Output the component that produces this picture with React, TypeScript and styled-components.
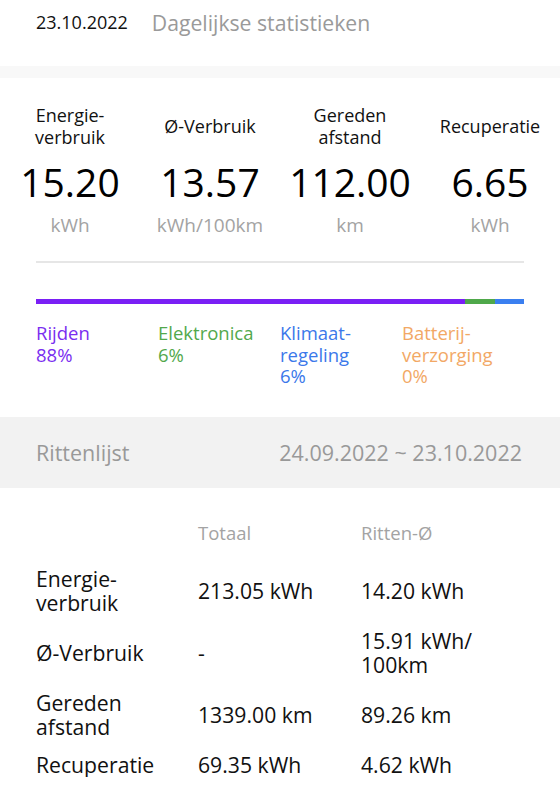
import React from "react";
import styled, { createGlobalStyle } from "styled-components";

const Global = createGlobalStyle`
  html, body { margin: 0; padding: 0; background: #fff; }
  body { font-family: "Open Sans", "Noto Sans", sans-serif; color: #111; }
`;

const Page = styled.div`
  width: 560px;
  display: flex;
  flex-direction: column;
`;

const Header = styled.div`
  height: 44px;
  display: flex;
  align-items: center;
  gap: 24px;
  padding: 0 36px;
  margin-bottom: 22px;
`;

const HeaderDate = styled.span`
  font-size: 18px;
  color: #111;
`;

const HeaderTitle = styled.span`
  font-size: 21.2px;
  color: #9a9a9a;
`;

const Band = styled.div<{ $h: number; $bg: string }>`
  height: ${(p) => p.$h}px;
  background: ${(p) => p.$bg};
`;

const Stats = styled.div`
  display: grid;
  grid-template-columns: repeat(4, 1fr);
  padding-top: 26px;
`;

const Stat = styled.div`
  display: flex;
  flex-direction: column;
  align-items: center;
  text-align: center;
`;

const StatLabel = styled.div`
  height: 44px;
  display: flex;
  align-items: center;
  font-size: 18px;
  line-height: 22px;
`;

const StatValue = styled.div`
  margin-top: 12px;
  font-size: 39px;
  line-height: 44px;
  color: #000;
`;

const StatUnit = styled.div`
  margin-top: 10px;
  font-size: 19px;
  line-height: 22px;
  color: #a3a3a3;
`;

const Inner = styled.div`
  padding: 0 36px;
`;

const Divider = styled.div`
  height: 2px;
  background: #e6e6e6;
  margin-top: 25px;
`;

const Bar = styled.div`
  display: flex;
  height: 5px;
  margin-top: 36px;
`;

const Seg = styled.div<{ $c: string }>`
  background: ${(p) => p.$c};
`;

const Legend = styled.div`
  display: grid;
  grid-template-columns: repeat(4, 1fr);
  margin-top: 18px;
  margin-bottom: 30px;
`;

const LegendItem = styled.div<{ $c: string }>`
  font-size: 18.5px;
  line-height: 21.5px;
  color: ${(p) => p.$c};
`;

const ListBar = styled.div`
  height: 71px;
  background: #f2f2f2;
  display: flex;
  align-items: center;
  justify-content: space-between;
  padding: 0 38px 0 36px;
  font-size: 21.5px;
  color: #999;
`;

const Table = styled.div`
  display: grid;
  grid-template-columns: 162px 163px 1fr;
  padding: 34px 36px 0;
  row-gap: 14px;
  align-items: center;
`;

const HeadCell = styled.div`
  font-size: 18.5px;
  line-height: 22px;
  color: #a3a3a3;
  margin-bottom: 9px;
`;

const Cell = styled.div`
  font-size: 21.2px;
  line-height: 24px;
  color: #111;
`;

const stats = [
  { label: ["Energie-", "verbruik"], value: "15.20", unit: "kWh" },
  { label: ["Ø-Verbruik"], value: "13.57", unit: "kWh/100km" },
  { label: ["Gereden", "afstand"], value: "112.00", unit: "km" },
  { label: ["Recuperatie"], value: "6.65", unit: "kWh" },
];

const segs = [
  { c: "#7a1ff5", p: 88 },
  { c: "#4fa84a", p: 6 },
  { c: "#3a7ff0", p: 6 },
];

const legend = [
  { c: "#7a2ef0", lines: ["Rijden", "88%"] },
  { c: "#52a84c", lines: ["Elektronica", "6%"] },
  { c: "#3b78ea", lines: ["Klimaat-", "regeling", "6%"] },
  { c: "#f2a865", lines: ["Batterij-", "verzorging", "0%"] },
];

const rows = [
  { label: ["Energie-", "verbruik"], total: ["213.05 kWh"], avg: ["14.20 kWh"] },
  { label: ["Ø-Verbruik"], total: ["-"], avg: ["15.91 kWh/", "100km"] },
  { label: ["Gereden", "afstand"], total: ["1339.00 km"], avg: ["89.26 km"] },
  { label: ["Recuperatie"], total: ["69.35 kWh"], avg: ["4.62 kWh"] },
];

const Lines = ({ lines }: { lines: string[] }) => (
  <>
    {lines.map((l, i) => (
      <React.Fragment key={i}>
        {i > 0 && <br />}
        {l}
      </React.Fragment>
    ))}
  </>
);

export default function App() {
  return (
    <Page>
      <Global />
      <Header>
        <HeaderDate>23.10.2022</HeaderDate>
        <HeaderTitle>Dagelijkse statistieken</HeaderTitle>
      </Header>
      <Band $h={12} $bg="#f8f8f8" />
      <Stats>
        {stats.map((s) => (
          <Stat key={s.value}>
            <StatLabel>
              <div>
                <Lines lines={s.label} />
              </div>
            </StatLabel>
            <StatValue>{s.value}</StatValue>
            <StatUnit>{s.unit}</StatUnit>
          </Stat>
        ))}
      </Stats>
      <Inner>
        <Divider />
        <Bar>
          {segs.map((s) => (
            <Seg key={s.c} $c={s.c} style={{ width: `${s.p}%` }} />
          ))}
        </Bar>
        <Legend>
          {legend.map((l) => (
            <LegendItem key={l.c} $c={l.c}>
              <Lines lines={l.lines} />
            </LegendItem>
          ))}
        </Legend>
      </Inner>
      <ListBar>
        <span>Rittenlijst</span>
        <span>24.09.2022 ~ 23.10.2022</span>
      </ListBar>
      <Table>
        <HeadCell />
        <HeadCell>Totaal</HeadCell>
        <HeadCell>Ritten-Ø</HeadCell>
        {rows.map((r, i) => (
          <React.Fragment key={i}>
            <Cell>
              <Lines lines={r.label} />
            </Cell>
            <Cell>
              <Lines lines={r.total} />
            </Cell>
            <Cell>
              <Lines lines={r.avg} />
            </Cell>
          </React.Fragment>
        ))}
      </Table>
    </Page>
  );
}
